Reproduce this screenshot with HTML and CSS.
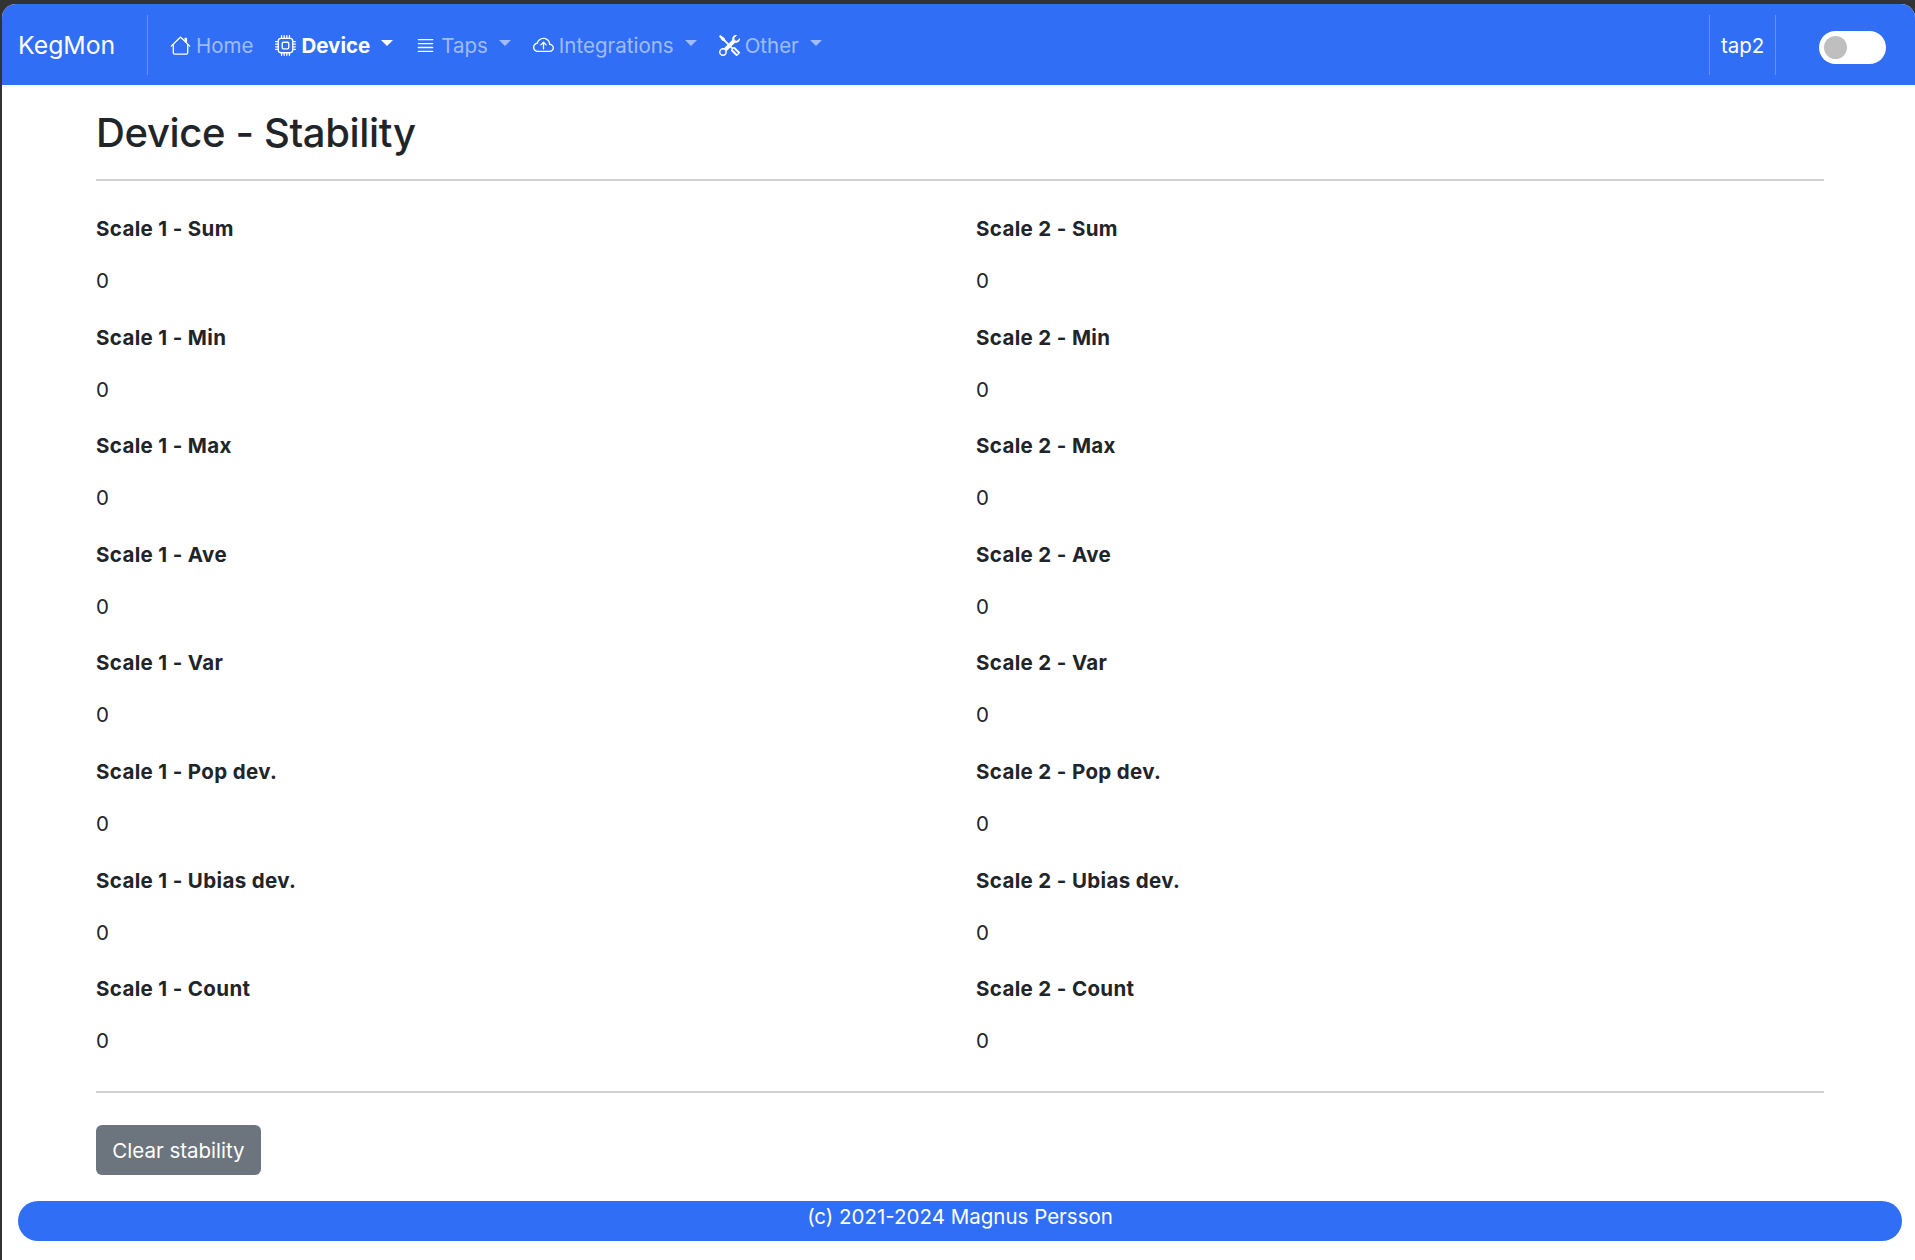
FILE: index.html
```html
<!DOCTYPE html>
<html lang="en">
<head>
  <meta charset="UTF-8" />
  <meta name="viewport" content="width=device-width, initial-scale=1" />
  <title>KegMon - Device Stability</title>
  <link rel="stylesheet" href="styles.css">
</head>
<body>
  <div class="window">
    <nav class="navbar">
      <a class="brand">KegMon</a>
      <ul class="nav-links">
        <li class="nav-item">
          <svg class="bi" viewBox="0 0 16 16" fill="currentColor"><path d="M2 13.5V7h1v6.5a.5.5 0 0 0 .5.5h9a.5.5 0 0 0 .5-.5V7h1v6.5a1.5 1.5 0 0 1-1.5 1.5h-9A1.5 1.5 0 0 1 2 13.5zm11-11V6l-2-2V2.5a.5.5 0 0 1 .5-.5h1a.5.5 0 0 1 .5.5z"/><path d="M7.293 1.5a1 1 0 0 1 1.414 0l6.647 6.646a.5.5 0 0 1-.708.708L8 2.207 1.354 8.854a.5.5 0 1 1-.708-.708L7.293 1.5z"/></svg>
          <span>Home</span>
        </li>
        <li class="nav-item active">
          <svg class="bi" viewBox="0 0 16 16" fill="currentColor"><path d="M5 0a.5.5 0 0 1 .5.5V2h1V.5a.5.5 0 0 1 1 0V2h1V.5a.5.5 0 0 1 1 0V2h1V.5a.5.5 0 0 1 1 0V2A2.5 2.5 0 0 1 14 4.5h1.5a.5.5 0 0 1 0 1H14v1h1.5a.5.5 0 0 1 0 1H14v1h1.5a.5.5 0 0 1 0 1H14v1h1.5a.5.5 0 0 1 0 1H14a2.5 2.5 0 0 1-2.5 2.5v1.5a.5.5 0 0 1-1 0V14h-1v1.5a.5.5 0 0 1-1 0V14h-1v1.5a.5.5 0 0 1-1 0V14h-1v1.5a.5.5 0 0 1-1 0V14A2.5 2.5 0 0 1 2 11.5H.5a.5.5 0 0 1 0-1H2v-1H.5a.5.5 0 0 1 0-1H2v-1H.5a.5.5 0 0 1 0-1H2v-1H.5a.5.5 0 0 1 0-1H2A2.5 2.5 0 0 1 4.5 2V.5A.5.5 0 0 1 5 0zm-.5 3A1.5 1.5 0 0 0 3 4.5v7A1.5 1.5 0 0 0 4.5 13h7a1.5 1.5 0 0 0 1.5-1.5v-7A1.5 1.5 0 0 0 11.5 3h-7zM5 6.5A1.5 1.5 0 0 1 6.5 5h3A1.5 1.5 0 0 1 11 6.5v3A1.5 1.5 0 0 1 9.5 11h-3A1.5 1.5 0 0 1 5 9.5v-3zM6.5 6a.5.5 0 0 0-.5.5v3a.5.5 0 0 0 .5.5h3a.5.5 0 0 0 .5-.5v-3a.5.5 0 0 0-.5-.5h-3z"/></svg>
          <span>Device</span><i class="caret"></i>
        </li>
        <li class="nav-item">
          <svg class="bi" viewBox="0 0 16 16" fill="currentColor"><path d="M2 12.5a.5.5 0 0 1 .5-.5h11a.5.5 0 0 1 0 1h-11a.5.5 0 0 1-.5-.5zm0-3a.5.5 0 0 1 .5-.5h11a.5.5 0 0 1 0 1h-11a.5.5 0 0 1-.5-.5zm0-3a.5.5 0 0 1 .5-.5h11a.5.5 0 0 1 0 1h-11a.5.5 0 0 1-.5-.5zm0-3a.5.5 0 0 1 .5-.5h11a.5.5 0 0 1 0 1h-11a.5.5 0 0 1-.5-.5z"/></svg>
          <span>Taps</span><i class="caret"></i>
        </li>
        <li class="nav-item">
          <svg class="bi" viewBox="0 0 16 16" fill="currentColor"><path d="M7.646 5.146a.5.5 0 0 1 .708 0l2 2a.5.5 0 0 1-.708.708L8.5 6.707V10.5a.5.5 0 0 1-1 0V6.707L6.354 7.854a.5.5 0 1 1-.708-.708l2-2z"/><path d="M4.406 3.342A5.53 5.53 0 0 1 8 2c2.69 0 4.923 2 5.166 4.579C14.758 6.804 16 8.137 16 9.773 16 11.569 14.502 13 12.687 13H3.781C1.708 13 0 11.366 0 9.318c0-1.763 1.266-3.223 2.942-3.593.143-.863.698-1.723 1.464-2.383zm.653.757c-.757.653-1.153 1.44-1.153 2.056v.448l-.445.049C2.064 6.805 1 7.952 1 9.318 1 10.785 2.23 12 3.781 12h8.906C13.98 12 15 10.988 15 9.773c0-1.216-1.02-2.228-2.313-2.228h-.5v-.5C12.188 4.825 10.328 3 8 3a4.53 4.53 0 0 0-2.941 1.1z"/></svg>
          <span>Integrations</span><i class="caret"></i>
        </li>
        <li class="nav-item">
          <svg class="bi" viewBox="0 0 16 16" fill="currentColor"><path d="M1 0 0 1l2.2 3.081a1 1 0 0 0 .815.419h.07a1 1 0 0 1 .708.293l2.675 2.675-2.617 2.654A3.003 3.003 0 0 0 0 13a3 3 0 1 0 5.878-.851l2.654-2.617.968.968-.305.914a1 1 0 0 0 .242 1.023l3.27 3.27a.997.997 0 0 0 1.414 0l1.586-1.586a.997.997 0 0 0 0-1.414l-3.27-3.27a1 1 0 0 0-1.023-.242L10.5 9.5l-.96-.96 2.68-2.643A3.005 3.005 0 0 0 16 3c0-.269-.035-.53-.102-.777l-2.14 2.141L12 4l-.364-1.757L13.777.102a3 3 0 0 0-3.675 3.68L7.462 6.46 4.793 3.793a1 1 0 0 1-.293-.707v-.071a1 1 0 0 0-.419-.814L1 0Zm9.646 10.646a.5.5 0 0 1 .708 0l2.914 2.915a.5.5 0 0 1-.707.707l-2.915-2.914a.5.5 0 0 1 0-.708ZM3 11l.471.242.529.026.287.445.445.287.026.529L5 13l-.242.471-.026.529-.445.287-.287.445-.529.026L3 15l-.471-.242L2 14.732l-.287-.445L1.268 14l-.026-.529L1 13l.242-.471.026-.529.445-.287.287-.445.529-.026L3 11Z"/></svg>
          <span>Other</span><i class="caret"></i>
        </li>
      </ul>
      <div class="device-name">tap2</div>
      <div class="toggle"><span class="knob"></span></div>
    </nav>

    <main class="content">
      <h1>Device - Stability</h1>
      <hr>
      <div class="stats">
        <div class="stat"><h6>Scale 1 - Sum</h6><p>0</p></div>
        <div class="stat"><h6>Scale 2 - Sum</h6><p>0</p></div>
        <div class="stat"><h6>Scale 1 - Min</h6><p>0</p></div>
        <div class="stat"><h6>Scale 2 - Min</h6><p>0</p></div>
        <div class="stat"><h6>Scale 1 - Max</h6><p>0</p></div>
        <div class="stat"><h6>Scale 2 - Max</h6><p>0</p></div>
        <div class="stat"><h6>Scale 1 - Ave</h6><p>0</p></div>
        <div class="stat"><h6>Scale 2 - Ave</h6><p>0</p></div>
        <div class="stat"><h6>Scale 1 - Var</h6><p>0</p></div>
        <div class="stat"><h6>Scale 2 - Var</h6><p>0</p></div>
        <div class="stat"><h6>Scale 1 - Pop dev.</h6><p>0</p></div>
        <div class="stat"><h6>Scale 2 - Pop dev.</h6><p>0</p></div>
        <div class="stat"><h6>Scale 1 - Ubias dev.</h6><p>0</p></div>
        <div class="stat"><h6>Scale 2 - Ubias dev.</h6><p>0</p></div>
        <div class="stat"><h6>Scale 1 - Count</h6><p>0</p></div>
        <div class="stat"><h6>Scale 2 - Count</h6><p>0</p></div>
      </div>
      <hr class="bottom-rule">
      <button type="button" class="btn">Clear stability</button>
    </main>

    <footer class="footer">(c) 2021-2024 Magnus Persson</footer>
  </div>
</body>
</html>
```

FILE: styles.css
```css
html, body {
  height: 100%;
}

body {
  margin: 0;
  background: #333335;
  font-family: Inter, "Liberation Sans", sans-serif;
  font-size: 20.5px;
  color: #212529;
  overflow: hidden;
}

.window {
  height: 1256px;
  margin: 4px 0 0 2px;
  background: #fff;
  border-radius: 14px 14px 0 0;
  overflow: hidden;
}

.navbar {
  display: flex;
  align-items: center;
  height: 81px;
  background: #316ef6;
  color: #fff;
}

.brand {
  display: flex;
  align-items: center;
  height: 60px;
  width: 146px;
  padding-left: 16px;
  box-sizing: border-box;
  border-right: 1px solid rgba(255, 255, 255, 0.25);
  font-size: 24.8px;
}

.nav-links {
  display: flex;
  flex: 1;
  margin: 0;
  padding: 2px 0 0 22px;
  list-style: none;
}

.nav-item {
  display: flex;
  align-items: center;
  margin-right: 22px;
  color: rgba(255, 255, 255, 0.55);
}

.nav-item .bi {
  width: 21px;
  height: 21px;
  margin-right: 5px;
  color: #fff;
}

.nav-item.active {
  color: #fff;
  font-weight: 700;
}

.caret {
  width: 0;
  height: 0;
  margin: -6px 0 0 11px;
  border-top: 6px solid currentColor;
  border-left: 6px solid transparent;
  border-right: 6px solid transparent;
}

.device-name {
  display: flex;
  align-items: center;
  height: 60px;
  width: 67px;
  box-sizing: border-box;
  padding-left: 11px;
  padding-top: 2px;
  border-left: 1px solid rgba(255, 255, 255, 0.25);
  border-right: 1px solid rgba(255, 255, 255, 0.25);
}

.toggle {
  display: flex;
  align-items: center;
  width: 67px;
  height: 33px;
  margin: 5px 29px 0 43px;
  padding-left: 5px;
  box-sizing: border-box;
  background: #fff;
  border-radius: 17px;
}

.knob {
  width: 23px;
  height: 23px;
  background: #bfbfbf;
  border-radius: 50%;
}

.content {
  padding: 0 91px 0 94px;
}

h1 {
  margin: 0;
  padding-top: 24px;
  font-size: 40px;
  font-weight: 500;
  line-height: 48px;
  letter-spacing: -0.35px;
}

hr {
  height: 0;
  margin: 22px 0 0;
  border: 0;
  border-top: 2px solid #d0d0d0;
}

.stats {
  display: grid;
  grid-template-columns: 880px 1fr;
  padding-top: 36px;
}

.stat {
  height: 108.6px;
}

h6 {
  margin: 0;
  font-size: 20.5px;
  font-weight: 700;
  line-height: 24px;
  letter-spacing: 0.35px;
}

.stat p {
  margin: 28px 0 0;
  line-height: 24px;
}

.bottom-rule {
  margin-top: 5.5px;
}

.btn {
  display: block;
  margin-top: 32px;
  width: 165px;
  height: 50px;
  padding: 0;
  background: #6c757d;
  color: #fff;
  border: 0;
  border-radius: 6px;
  font: inherit;
}

.footer {
  height: 40px;
  margin: 26px 13px 0 16px;
  background: #316ef6;
  color: #fff;
  border-radius: 20px;
  text-align: center;
  line-height: 32px;
}
```
